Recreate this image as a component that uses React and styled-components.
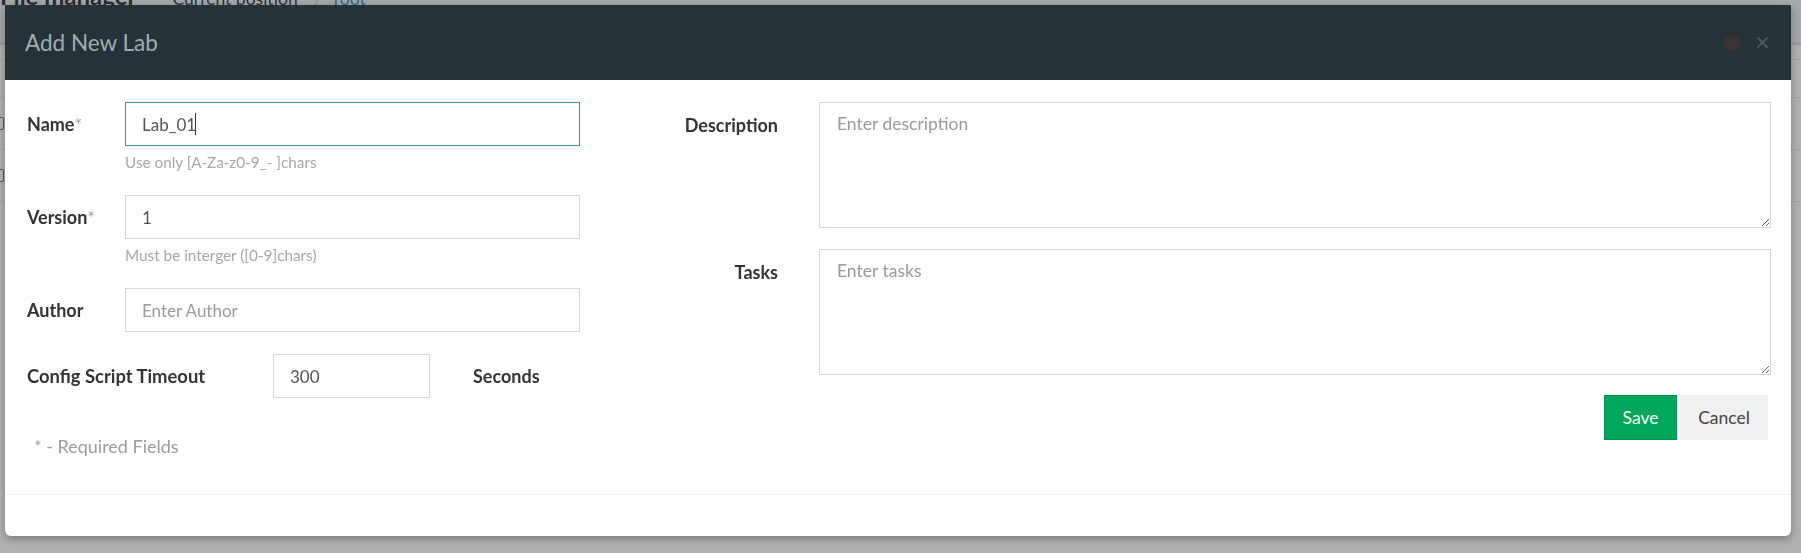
import React from "react";
import styled, { createGlobalStyle } from "styled-components";

const GlobalStyle = createGlobalStyle`
  html, body { margin: 0; padding: 0; }
  body {
    background: #b1b1b1;
    font-family: Lato, "Open Sans", "Noto Sans", sans-serif;
    overflow: hidden;
    width: 1801px;
    height: 553px;
  }
  * { box-sizing: border-box; }
`;

const Page = styled.div`
  width: 1801px;
  height: 553px;
  background: #b1b1b1;
  overflow: hidden;
`;

const TopBar = styled.div`
  height: 42px;
  background: #a6a9ac;
  overflow: hidden;
`;

const Crumbs = styled.div`
  display: flex;
  align-items: baseline;
  margin-top: -16px;
  line-height: 24px;
  white-space: nowrap;
`;

const PageTitle = styled.span`
  font-size: 24px;
  font-weight: 700;
  color: #2b2d2f;
  margin-right: 36px;
`;

const Crumb = styled.span`
  font-size: 17.5px;
  color: ${(p) => p.$color || "#2f3235"};
  margin-right: ${(p) => p.$gap || 0}px;
`;

const TopRule = styled.div`
  height: 3px;
  background: #9d9fa2;
`;

const ListRow = styled.div`
  height: ${(p) => p.$h}px;
  border-bottom: 1px solid #a4a4a4;
  display: flex;
  align-items: center;
`;

const FakeCheck = styled.span`
  width: 13px;
  height: 13px;
  margin-left: -9px;
  border: 1px solid #555;
  border-radius: 2px;
  background: #b8b8b8;
`;

/* ---------- modal ---------- */
const Modal = styled.div`
  position: fixed;
  left: 5px;
  top: 5px;
  width: 1786px;
  background: #fff;
  border-radius: 0 0 6px 6px;
  box-shadow: 0 3px 8px rgba(0, 0, 0, 0.32);
  display: flex;
  flex-direction: column;
  font-family: Lato, "Open Sans", "Noto Sans", sans-serif;
`;

const Header = styled.div`
  height: 75px;
  background: #263238;
  display: flex;
  align-items: center;
  justify-content: space-between;
  padding: 0 22px 0 20px;
`;

const Title = styled.h4`
  margin: 0;
  font-size: 22.5px;
  font-weight: 400;
  color: #a0acb4;
  line-height: 28px;
`;

const HeaderTools = styled.div`
  display: flex;
  align-items: center;
  gap: 16px;
`;

const ToolButton = styled.button`
  border: 0;
  padding: 0;
  background: transparent;
  display: flex;
  align-items: center;
  justify-content: center;
  width: ${(p) => p.$size}px;
  height: ${(p) => p.$size}px;
`;

const Body = styled.div`
  height: 414px;
  padding: 22px 20px 0 22px;
  display: flex;
`;

const LeftCol = styled.div`
  width: 560px;
  flex: none;
`;

const Field = styled.div`
  display: grid;
  grid-template-columns: 98px 455px;
  align-items: center;
  margin-bottom: 22px;
`;

const Label = styled.label`
  font-size: 18px;
  font-weight: 700;
  color: #333;
  line-height: 24px;
  text-align: ${(p) => (p.$right ? "right" : "left")};
  padding-top: ${(p) => p.$top || 0}px;
  align-self: ${(p) => (p.$top ? "start" : "center")};
  white-space: nowrap;
`;

const Req = styled.span`
  font-weight: 400;
  color: #9a9a9a;
`;

const Input = styled.input`
  height: 44px;
  width: ${(p) => p.$w || 455}px;
  border: 1px solid ${(p) => (p.$focused ? "#3c8dbc" : "#d2d6de")};
  border-radius: 0;
  padding: 0 16px;
  font-family: inherit;
  font-size: 17px;
  color: #555;
  outline: none;
  background: #fff;
  &::placeholder { color: #999; }
`;

const InputWrap = styled.div`
  position: relative;
  display: flex;
`;

const Caret = styled.span`
  position: absolute;
  left: 70px;
  top: 11px;
  width: 1px;
  height: 22px;
  background: #333;
`;

const Help = styled.div`
  grid-column: 2;
  margin-top: 5px;
  font-size: 15.3px;
  line-height: 22px;
  color: #a6a6a6;
  white-space: nowrap;
`;

const ConfigRow = styled.div`
  display: flex;
  align-items: center;
`;

const ConfigLabel = styled(Label)`
  width: 246px;
  font-size: 18.4px;
`;

const Unit = styled.span`
  margin-left: 43px;
  font-size: 18px;
  font-weight: 700;
  color: #333;
`;

const Note = styled.div`
  margin-top: 36px;
  padding-left: 7px;
  font-size: 18px;
  line-height: 24px;
  color: #9a9a9a;
`;

const RightCol = styled.div`
  flex: 1;
  display: flex;
  flex-direction: column;
  gap: 21px;
`;

const AreaRow = styled.div`
  display: grid;
  grid-template-columns: 191px 1fr;
  column-gap: 41px;
`;

const TextArea = styled.textarea`
  height: 126px;
  width: 100%;
  border: 1px solid #d2d6de;
  border-radius: 0;
  padding: 9px 17px;
  font-family: inherit;
  font-size: 17.5px;
  line-height: 24px;
  color: #555;
  outline: none;
  resize: vertical;
  &::placeholder { color: #999; }
`;

const Actions = styled.div`
  display: flex;
  justify-content: flex-end;
  gap: 3px;
  padding-right: 3px;
  margin-top: -1px;
`;

const Btn = styled.button`
  height: 45px;
  width: ${(p) => p.$w}px;
  border: 1px solid ${(p) => (p.$primary ? "#008d4c" : "#f0f0f0")};
  background: ${(p) => (p.$primary ? "#00a65a" : "#f0f0f0")};
  color: ${(p) => (p.$primary ? "#fff" : "#444")};
  font-family: inherit;
  font-size: 17.5px;
  border-radius: 0;
  padding: 0;
`;

const Footer = styled.div`
  height: 42px;
  border-top: 1px solid #f2f2f2;
`;

export default function App() {
  return (
    <>
      <GlobalStyle />
      <Page>
        <TopBar>
          <Crumbs>
            <PageTitle>File manager</PageTitle>
            <Crumb $gap={16}>Current position</Crumb>
            <Crumb $color="#8a8d90" $gap={12}>/</Crumb>
            <Crumb $color="#2d6792">root</Crumb>
          </Crumbs>
        </TopBar>
        <TopRule />
        <ListRow $h={15} />
        <ListRow $h={38} />
        <ListRow $h={52}>
          <FakeCheck />
        </ListRow>
        <ListRow $h={52}>
          <FakeCheck />
        </ListRow>
      </Page>

      <Modal>
        <Header>
          <Title>Add New Lab</Title>
          <HeaderTools>
            <ToolButton $size={16} aria-label="status">
              <svg width="16" height="16" viewBox="0 0 16 16">
                <circle cx="8" cy="8" r="8" fill="#3a3234" />
              </svg>
            </ToolButton>
            <ToolButton $size={13} aria-label="close">
              <svg width="13" height="13" viewBox="0 0 13 13">
                <path d="M1.5 1.5 L11.5 11.5 M11.5 1.5 L1.5 11.5" stroke="#4b5961" strokeWidth="2" />
              </svg>
            </ToolButton>
          </HeaderTools>
        </Header>

        <Body>
          <LeftCol>
            <Field>
              <Label>
                Name<Req>*</Req>
              </Label>
              <InputWrap>
                <Input $focused defaultValue="Lab_01" />
                <Caret />
              </InputWrap>
              <Help>Use only [A-Za-z0-9_- ]chars</Help>
            </Field>
            <Field>
              <Label>
                Version<Req>*</Req>
              </Label>
              <Input defaultValue="1" />
              <Help>Must be interger ([0-9]chars)</Help>
            </Field>
            <Field>
              <Label>Author</Label>
              <Input placeholder="Enter Author" />
            </Field>
            <ConfigRow>
              <ConfigLabel>Config Script Timeout</ConfigLabel>
              <Input $w={157} defaultValue="300" />
              <Unit>Seconds</Unit>
            </ConfigRow>
            <Note>* - Required Fields</Note>
          </LeftCol>

          <RightCol>
            <AreaRow>
              <Label $right $top={11}>Description</Label>
              <TextArea placeholder="Enter description" />
            </AreaRow>
            <AreaRow>
              <Label $right $top={11}>Tasks</Label>
              <TextArea placeholder="Enter tasks" />
            </AreaRow>
            <Actions>
              <Btn $primary $w={73}>Save</Btn>
              <Btn $w={88}>Cancel</Btn>
            </Actions>
          </RightCol>
        </Body>
        <Footer />
      </Modal>
    </>
  );
}
